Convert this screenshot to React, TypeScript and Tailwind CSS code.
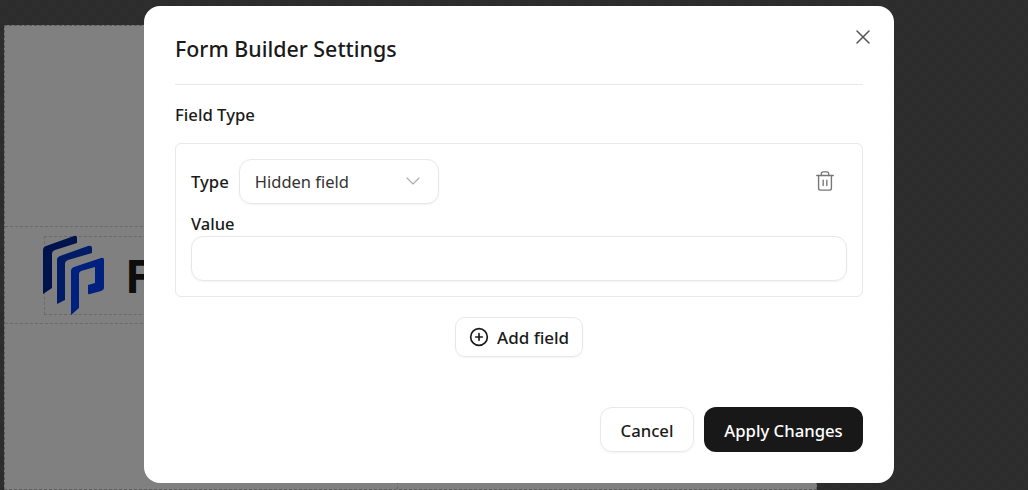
import { ChevronDown, CirclePlus, Trash2, X } from "lucide-react"

const checker =
  "bg-[#2d2d2d] bg-[conic-gradient(#2c2c2c_25%,#2e2e2e_0_50%,#2c2c2c_0_75%,#2e2e2e_0)] bg-[length:16px_16px]"

function Logo() {
  return (
    <svg viewBox="0 0 64 80" className="-ml-[2px] h-[80px] w-[64px]">
      <path d="M0 15 Q0 12 3 11 L31 1 Q34 0 34 3 V8 L12 15 Q9 16 9 19 V53 L0 59 Z" fill="#00134d" />
      <path d="M14 25 Q14 22 17 21 L45 11 Q49 10 49 13 V18 L25 25 Q22 26 22 29 V65 L14 69 Z" fill="#001c66" />
      <path d="M28 36 Q28 33 31 32 L58 23 Q61 22 61 25 V53 Q61 55 58 56 L47 59 Q45 60 45 58 V50 L52 48 V32 L38 36 Q36 37 36 39 V73 L28 80 Z" fill="#002080" />
    </svg>
  )
}

export default function App() {
  return (
    <div className={`relative h-[490px] w-[1028px] overflow-hidden font-['Noto_Sans',sans-serif] ${checker}`}>
      <div className="ml-[4px] flex h-[465px] w-[813px] translate-y-[25px] flex-col border border-dashed border-[#5e5e5e] bg-[#808080] pt-[200px]">
        <div className="flex h-[98px] items-center border-y border-dashed border-[#6a6a6a] pl-[39px]">
          <div className="flex h-[79px] items-center border border-dashed border-[#6a6a6a] pr-[200px]">
            <Logo />
            <span className="ml-[18px] text-[46px] font-bold leading-none text-[#0d0d0d]">F</span>
          </div>
        </div>
        <div className="ml-[392px] flex-1 border-l border-dashed border-[#6a6a6a]" />
      </div>

      <div className="absolute left-[144px] top-[6px] h-[477px] w-[750px] rounded-[16px] bg-white px-[31px] text-[#1a1a1a]">
        <button className="absolute right-[19px] top-[19px] text-[#555]">
          <X size={24} strokeWidth={1.5} />
        </button>

        <div className="flex h-[79px] items-center border-b border-[#e8e8e8] pt-[7px]">
          <h2 className="text-[21.4px] font-medium leading-none">Form Builder Settings</h2>
        </div>

        <p className="mt-[19px] text-[16.7px] font-medium leading-[22px]">Field Type</p>

        <div className="mt-[17px] flex h-[154px] flex-col rounded-[6px] border border-[#e8e8e8] px-[15px] pt-[15px]">
          <div className="flex items-center gap-[10px]">
            <span className="text-[16.7px] font-medium">Type</span>
            <div className="flex h-[45px] w-[200px] items-center justify-between rounded-[12px] border border-[#e8e8e8] pl-[15px] pr-[13px] shadow-[0_1px_2px_rgba(0,0,0,0.05)]">
              <span className="pt-[2px] text-[16.5px] text-[#333]">Hidden field</span>
              <ChevronDown size={24} strokeWidth={1.1} className="-translate-y-[1px] text-[#aaa]" />
            </div>
            <button className="ml-auto mr-[11px] -translate-y-[1px] text-[#777]">
              <Trash2 size={22} strokeWidth={1.5} />
            </button>
          </div>
          <label className="mt-[9px] text-[16.5px] font-medium leading-[22px]">Value</label>
          <input className="mt-[1px] h-[45px] w-full rounded-[12px] border border-[#e8e8e8] shadow-[0_1px_2px_rgba(0,0,0,0.05)]" />
        </div>

        <div className="mt-[20px] flex justify-center">
          <button className="flex h-[40px] w-[128px] items-center gap-[8px] rounded-[10px] border border-[#e8e8e8] pl-[13px] text-[17px] font-medium shadow-[0_1px_2px_rgba(0,0,0,0.05)]">
            <CirclePlus size={20} strokeWidth={2} />
            <span className="pt-[2px]">Add field</span>
          </button>
        </div>

        <div className="mt-[50px] flex justify-end gap-[10px]">
          <button className="h-[45px] w-[94px] rounded-[12px] border border-[#e8e8e8] pt-[2px] text-[16.7px] font-medium shadow-[0_1px_2px_rgba(0,0,0,0.05)]">
            Cancel
          </button>
          <button className="h-[45px] w-[159px] rounded-[12px] bg-[#181818] pt-[2px] text-[16.7px] font-medium text-white">
            Apply Changes
          </button>
        </div>
      </div>
    </div>
  )
}
